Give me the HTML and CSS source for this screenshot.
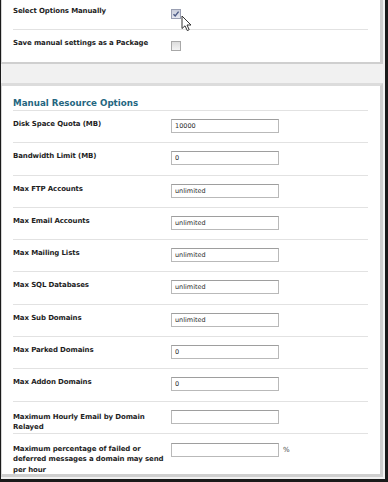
FILE: index.html
```html
<!DOCTYPE html>
<html>

<head>
    <meta charset="UTF-8">
    <title>Manual Resource Options</title>
    <link rel="stylesheet" href="styles.css">
</head>

<body>
    <div class="frame">
        <div class="panel panel-top">
            <div class="opt-row first">
                <span class="label">Select Options Manually</span>
                <span class="check checked">
                    <svg width="8" height="8" viewBox="0 0 8 8"><path d="M1.5 4.2 L3.2 6 L6.6 1.6" fill="none" stroke="#4c5a86" stroke-width="1.4"/></svg>
                </span>
            </div>
            <div class="opt-row">
                <span class="label">Save manual settings as a Package</span>
                <span class="check"></span>
            </div>

            <svg class="cursor" width="12" height="17" viewBox="0 0 12 17">
                <path d="M1 1 L1 13.5 L4 10.8 L6.3 15.6 L8.2 14.7 L6 10 L10 10 Z" fill="#fff" stroke="#333" stroke-width="1" stroke-linejoin="round"/>
            </svg>
        </div>

        <div class="panel panel-main">
            <h3>Manual Resource Options</h3>

            <div class="res-row">
                <label for="quota">Disk Space Quota (MB)</label>
                <input type="text" id="quota" value="10000">
            </div>
            <div class="res-row">
                <label for="bw">Bandwidth Limit (MB)</label>
                <input type="text" id="bw" value="0">
            </div>
            <div class="res-row">
                <label for="ftp">Max FTP Accounts</label>
                <input type="text" id="ftp" value="unlimited">
            </div>
            <div class="res-row">
                <label for="email">Max Email Accounts</label>
                <input type="text" id="email" value="unlimited">
            </div>
            <div class="res-row">
                <label for="lists">Max Mailing Lists</label>
                <input type="text" id="lists" value="unlimited">
            </div>
            <div class="res-row">
                <label for="sql">Max SQL Databases</label>
                <input type="text" id="sql" value="unlimited">
            </div>
            <div class="res-row">
                <label for="sub">Max Sub Domains</label>
                <input type="text" id="sub" value="unlimited">
            </div>
            <div class="res-row">
                <label for="parked">Max Parked Domains</label>
                <input type="text" id="parked" value="0">
            </div>
            <div class="res-row">
                <label for="addon">Max Addon Domains</label>
                <input type="text" id="addon" value="0">
            </div>
            <div class="res-row">
                <label for="hourly" class="multi">Maximum Hourly Email by Domain<br>Relayed</label>
                <input type="text" id="hourly" value="">
            </div>
            <div class="res-row last">
                <label for="failed" class="multi">Maximum percentage of failed or<br>deferred messages a domain may send<br>per hour</label>
                <input type="text" id="failed" value="">
                <span class="unit">%</span>
            </div>
        </div>
    </div>
</body>

</html>
```

FILE: styles.css
```css
body {
    margin: 0;
    font-family: "DejaVu Sans", Verdana, sans-serif;
    color: #1e1e1e;
}

.frame {
    width: 388px;
    height: 482px;
    box-sizing: border-box;
    border-left: 1px solid #1a1a1a;
    border-right: 3px solid #1a1a1a;
    border-bottom: 3px solid #1a1a1a;
    background-color: #f1f1f1;
    overflow: hidden;
}

.panel {
    position: relative;
    margin-right: 2px;
    background-color: #fff;
    border: 1px solid #d6d6d6;
    border-right: 3px solid #cfcfcf;
    border-bottom: 2px solid #cfcfcf;
}

.panel-top {
    border-top: none;
    margin-bottom: 19px;
}

.panel-main {
    border-top: 3px solid #dcdcdc;
    border-bottom-width: 3px;
}

/* top options */

.opt-row {
    display: flex;
    align-items: flex-start;
    margin: 0 12px 0 11px;
    height: 32px;
}

.opt-row.first {
    height: 29px;
    border-bottom: 1px solid #e2e2e2;
}

.label,
label {
    width: 158px;
    flex-shrink: 0;
    font-size: 7px;
    font-weight: bold;
    letter-spacing: -0.12px;
    line-height: 10.5px;
    padding-top: 8px;
}

.opt-row.first .label {
    padding-top: 6px;
}

.check {
    width: 10px;
    height: 10px;
    box-sizing: border-box;
    margin-top: 11px;
    border: 1px solid #a8a8a8;
    background: linear-gradient(#dcdcdc, #f4f4f4);
    display: flex;
    align-items: center;
    justify-content: center;
}

.opt-row.first .check {
    margin-top: 9px;
}

.check.checked {
    background: linear-gradient(#c9cddb, #e6e8f0);
    border-color: #9a9fb2;
}

.cursor {
    position: absolute;
    left: 179px;
    top: 15px;
}

/* resource options */

h3 {
    margin: 0 12px 0 11px;
    padding: 11px 0 1px;
    font-size: 8.7px;
    line-height: 12px;
    color: #24667f;
    border-bottom: 1px solid #e2e2e2;
}

.res-row {
    display: flex;
    align-items: flex-start;
    margin: 0 12px 0 11px;
    height: 31.3px;
    border-bottom: 1px solid #e2e2e2;
}

.res-row.last {
    height: 40px;
    border-bottom: none;
}

.res-row .multi {
    padding-top: 10px;
}

input {
    width: 108px;
    height: 14px;
    box-sizing: border-box;
    margin: 8px 0 0;
    padding: 0 3px;
    border: 1px solid #b9b9b9;
    border-top-color: #9e9e9e;
    background-color: #fff;
    font-family: "DejaVu Sans", Verdana, sans-serif;
    font-size: 6.5px;
    color: #2a2a2a;
    -webkit-text-fill-color: #2a2a2a;
    outline: none;
}

.res-row.last input {
    margin-top: 9px;
}

.unit {
    font-size: 7px;
    margin: 12px 0 0 4px;
    color: #444;
}
```
